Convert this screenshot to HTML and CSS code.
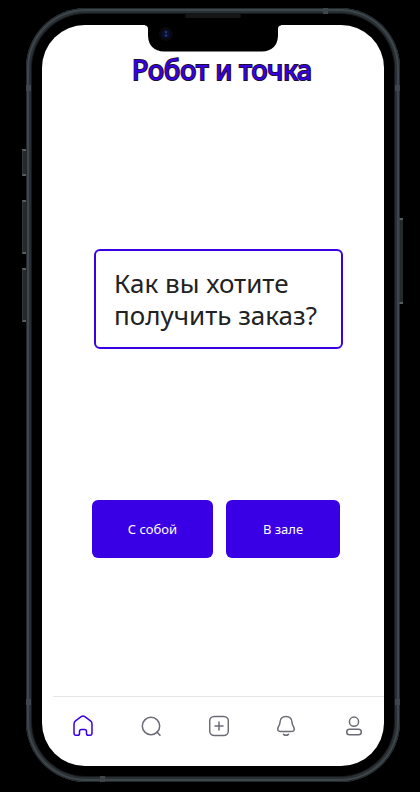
FILE: index.html
```html
<!DOCTYPE html>
<html lang="ru">
<head>
<meta charset="utf-8">
<meta name="viewport" content="width=device-width, initial-scale=1">
<title>Робот и точка</title>
<link rel="stylesheet" href="styles.css">
</head>
<body>
<div class="phone">
  <span class="key key-mute"></span>
  <span class="key key-up"></span>
  <span class="key key-down"></span>
  <span class="key key-power"></span>
  <span class="band band-top"></span>
  <span class="band band-bottom"></span>
  <span class="band band-left-top"></span>
  <span class="band band-left-bottom"></span>
  <span class="band band-right-top"></span>
  <span class="band band-right-bottom"></span>
  <span class="speaker"></span>
  <div class="screen">
    <svg class="notch" viewBox="0 0 136 27" aria-hidden="true">
      <path d="M0 0H136V.5Q133 .5 133 4V11Q132 26 117 26.500H19Q4 26 3 11V4Q3 .5 0 .5Z" fill="#000"/>
      <circle cx="21" cy="9" r="7" fill="#08080e"/>
      <circle cx="21" cy="9" r="4" fill="#0c1030"/>
      <circle cx="21" cy="7" r="1.200" fill="#26367c"/>
      <circle cx="21" cy="10.500" r="1.200" fill="#26367c"/>
    </svg>
    <header class="header"><h1 class="title">Робот и точка</h1></header>
    <main class="content">
      <p class="question">Как вы хотите получить заказ?</p>
      <div class="actions">
        <button class="choice choice-wide" type="button">С собой</button>
        <button class="choice" type="button">В зале</button>
      </div>
    </main>
    <nav class="tabs" aria-label="Меню">
      <a class="tab tab-active" href="#home" aria-label="Главная">
        <svg viewBox="0 0 20 22"><path d="M8.200 1.700Q10 .4 11.800 1.700L17.500 5.900Q19 7 19 9V18Q19 20.300 17 20.300H15.300Q13.500 20.300 13.500 18.500V16.500Q13.500 14.500 11.500 14.500H8.500Q6.500 14.500 6.500 16.500V18.500Q6.500 20.300 4.700 20.300H3Q1 20.300 1 18V9Q1 7 2.500 5.900Z"/></svg>
      </a>
      <a class="tab" href="#search" aria-label="Поиск">
        <svg viewBox="0 0 20 22"><circle cx="10" cy="11" r="8.700"/><path d="M16 17L19 20.300"/></svg>
      </a>
      <a class="tab" href="#add" aria-label="Добавить">
        <svg viewBox="0 0 20 22"><rect x=".7" y="1.500" width="18.600" height="19" rx="4.500"/><path d="M10 7V15M6 11H14"/></svg>
      </a>
      <a class="tab" href="#alerts" aria-label="Уведомления">
        <svg viewBox="0 0 20 22"><path d="M10 1.500C6.500 1.500 4.200 3.700 4 7.300C3.900 10 2.500 11.200 1.900 13.200C1.300 15.500 2.700 16.600 5 16.600H15C17.300 16.600 18.700 15.500 18.100 13.200C17.500 11.200 16.100 10 16 7.300C15.800 3.700 13.500 1.500 10 1.500ZM7.500 19.300Q10 21.300 12.500 19.300"/></svg>
      </a>
      <a class="tab" href="#profile" aria-label="Профиль">
        <svg viewBox="0 0 20 22"><circle cx="10" cy="6.700" r="4.600"/><rect x="2.700" y="14.300" width="14.600" height="5.500" rx="2.750"/></svg>
      </a>
    </nav>
  </div>
</div>
</body>
</html>
```
FILE: styles.css
```css
* {
  box-sizing: border-box;
}

body {
  margin: 0;
  min-height: 100vh;
  display: flex;
  padding: 8px 20px 10px 26px;
  background: #000;
  font-family: "Noto Sans", sans-serif;
}

.phone {
  position: relative;
  flex: 1;
  display: flex;
  padding: 17px 16px 16px;
  border-radius: 60px;
  background: #000;
  box-shadow: inset 0 0 0 1px #22282b, inset 0 0 0 3px #3d464a, inset 0 0 0 5px #292f32, inset 0 0 0 6px #15181a;
}

.screen {
  position: relative;
  flex: 1;
  display: flex;
  flex-direction: column;
  overflow: hidden;
  border-radius: 43px;
  background: #fff;
}

.notch {
  position: absolute;
  top: 0;
  left: calc(50% - 68px);
  width: 136px;
  height: 27px;
}

.speaker {
  position: absolute;
  top: 6px;
  left: calc(50% - 28px);
  width: 56px;
  height: 4px;
  border-radius: 2px;
  background: #161616;
}

.key {
  position: absolute;
  left: -4px;
  width: 4px;
  background: #24292b;
  border: 1px solid #33383a;
  border-width: 2px 0 2px 1px;
  border-top-color: #595c5e;
  border-bottom-color: #595c5e;
}

.key-mute { top: 141px; height: 27px; }
.key-up { top: 192px; height: 54px; }
.key-down { top: 260px; height: 54px; }
.key-power { left: auto; right: -3px; top: 210px; height: 86px; }

.band {
  position: absolute;
  width: 5px;
  height: 6px;
  background: #3f464b;
}

.band-top { top: 0; right: 72px; }
.band-bottom { bottom: 0; left: 74px; }
.band-left-top { top: 77px; left: 0; }
.band-left-bottom { bottom: 77px; left: 0; }
.band-right-top { top: 77px; right: 0; }
.band-right-bottom { bottom: 77px; right: 0; }

.header {
  padding: 26px 0 0 18px;
  text-align: center;
}

.title {
  margin: 0;
  font-size: 27px;
  line-height: 38px;
  font-weight: 400;
  color: #3a00e5;
  -webkit-text-stroke: 2px #1c1038;
  paint-order: stroke fill;
}

.content {
  flex: 1;
  padding: 160px 41px 0 50px;
}

.question {
  margin: 0 0 0 2px;
  padding: 16px 18px;
  border: 2px solid #3a00e5;
  border-radius: 6px;
  font-size: 26px;
  line-height: 32px;
  color: #222;
}

.actions {
  display: flex;
  gap: 13px;
  margin: 151px 3px 0 0;
}

.choice {
  flex: 114;
  height: 58px;
  padding: 0;
  border: 0;
  border-radius: 6px;
  background: #3a00e5;
  font: 13px/20px "Noto Sans", sans-serif;
  color: #fff;
}

.choice-wide {
  flex-grow: 121;
}

.tabs {
  display: flex;
  justify-content: space-between;
  align-items: flex-start;
  height: 70px;
  margin-left: 11px;
  padding: 18px 20px 0;
  border-top: 1px solid #e6e6e8;
}

.tab {
  display: block;
  width: 20px;
  height: 22px;
  color: #6b6b76;
}

.tab-active {
  color: #3a00e5;
}

.tab svg {
  display: block;
  width: 20px;
  height: 22px;
  fill: none;
  stroke: currentColor;
  stroke-width: 1.5;
  stroke-linecap: round;
  stroke-linejoin: round;
}
```
